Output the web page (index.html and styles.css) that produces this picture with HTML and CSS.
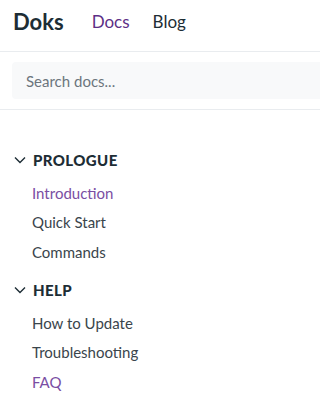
FILE: index.html
```html
<!DOCTYPE html>
<html lang="en">
<head>
<meta charset="utf-8">
<title>Doks</title>
<link rel="stylesheet" href="styles.css">
</head>
<body>
<header class="topbar">
  <a class="brand" href="#">Doks</a>
  <nav class="mainnav">
    <a class="navlink active" href="#">Docs</a>
    <a class="navlink" href="#">Blog</a>
  </nav>
</header>
<div class="searchbar">
  <input class="search" type="search" placeholder="Search docs...">
</div>
<aside class="sidebar">
  <section class="group">
    <h3 class="group-title"><svg class="chev" viewBox="0 0 12 8" width="12" height="8"><path d="M1 1.5 L6 6.5 L11 1.5" fill="none" stroke="currentColor" stroke-width="1.4"/></svg>PROLOGUE</h3>
    <ul class="links">
      <li><a class="link active" href="#">Introduction</a></li>
      <li><a class="link" href="#">Quick Start</a></li>
      <li><a class="link" href="#">Commands</a></li>
    </ul>
  </section>
  <section class="group">
    <h3 class="group-title"><svg class="chev" viewBox="0 0 12 8" width="12" height="8"><path d="M1 1.5 L6 6.5 L11 1.5" fill="none" stroke="currentColor" stroke-width="1.4"/></svg>HELP</h3>
    <ul class="links">
      <li><a class="link" href="#">How to Update</a></li>
      <li><a class="link" href="#">Troubleshooting</a></li>
      <li><a class="link active" href="#">FAQ</a></li>
    </ul>
  </section>
</aside>
</body>
</html>
```
FILE: styles.css
```css
html, body {
  margin: 0;
  padding: 0;
  background: #fff;
  overflow: hidden;
}
body {
  font-family: "Lato", "Open Sans", sans-serif;
  color: #1d2d35;
}
a { text-decoration: none; }
.topbar {
  display: flex;
  align-items: center;
  box-sizing: border-box;
  height: 52px;
  padding: 0 12px 8px 13px;
  border-bottom: 1px solid #e9ecef;
}
.brand {
  font-size: 22px;
  font-weight: 700;
  color: #1d2d35;
  margin-right: 28px;
}
.mainnav {
  display: flex;
  gap: 23px;
}
.navlink {
  font-size: 17px;
  color: #1d2d35;
}
.navlink.active { color: #5d2f86; }
.searchbar {
  padding: 10px 0 10px 12px;
  border-bottom: 1px solid #e9ecef;
}
.search {
  display: block;
  box-sizing: border-box;
  width: 100%;
  height: 37px;
  border: 0;
  border-radius: 4px 0 0 4px;
  background: #f8f9fa;
  padding: 0 14px;
  font-family: inherit;
  font-size: 15px;
  color: #1d2d35;
  outline: none;
}
.search::placeholder { color: #6c757d; }
.sidebar {
  padding: 41px 0 0 14px;
}
.group { margin-bottom: 14px; }
.group-title {
  display: flex;
  align-items: center;
  gap: 7px;
  margin: 0 0 9px;
  font-size: 15px;
  font-weight: 900;
  letter-spacing: 0.4px;
  color: #1d2d35;
}
.chev { color: #1d2d35; }
.links {
  list-style: none;
  margin: 0;
  padding: 0 0 0 18px;
}
.links li { height: 30px; display: flex; align-items: center; }
.links li:first-child { height: 29px; }
.link {
  font-size: 15px;
  color: #3a454c;
}
.link.active { color: #7a4ea3; }
```
